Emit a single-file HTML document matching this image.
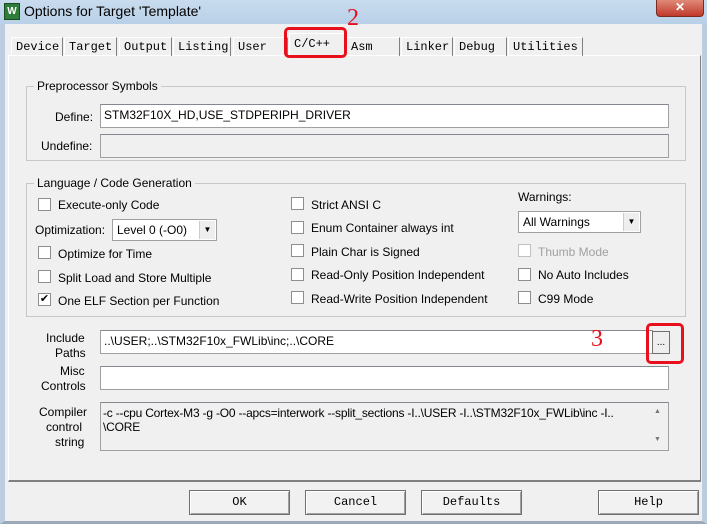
<!DOCTYPE html>
<html><head><meta charset="utf-8"><style>
*{margin:0;padding:0;box-sizing:border-box}
body{width:707px;height:524px;overflow:hidden;background:#f0f0f0;font-family:"Liberation Sans",sans-serif;font-size:12px;color:#000;position:relative;letter-spacing:0}
.a{position:absolute;white-space:nowrap}
.title{left:0;top:0;width:707px;height:24px;background:linear-gradient(#c9dcee,#b8d0e8)}
.frame{left:0;top:24px;width:707px;height:500px;border-left:5px solid #bccde0;border-right:5px solid #bccde0;border-bottom:3px solid #9aa8b8;background:#f0f0f0}
.tab{top:37px;height:19px;font-family:"Liberation Mono",monospace;font-size:12px;letter-spacing:0;line-height:19px;padding-left:4px;border-left:1px solid #fff;border-right:1px solid #808080;border-top:1px solid #fff}
.page{left:8px;top:55px;width:693px;height:427px;border:1px solid #fff;border-right-color:#808080;border-bottom:2px solid #808080}
.grp{border:1px solid #c8c8c8}
.leg{background:#f0f0f0;padding:0 3px}
.in{background:#fff;border:1px solid #a0a0a0;border-top-color:#828790;height:24px;padding:3px 3px;font-size:12px}
.gray{background:#f0f0f0}
.cb{width:13px;height:13px;border:1px solid #8e8e8e;background:#fff}
.btn{top:490px;width:101px;height:25px;border:1px solid #707070;background:#f2f2f2;box-shadow:inset 1px 1px #fff,inset -1px -1px #a0a0a0;font-family:"Liberation Mono",monospace;font-size:12px;letter-spacing:0;text-align:center;line-height:23px}
.red{border:3px solid #e8101c;border-radius:5px}
.sel{background:#fff;border:1px solid #a0a0a0;height:22px;padding:3px 4px}
.arr{position:absolute;right:1px;top:1px;width:16px;height:18px;background:#eee;border-left:1px solid #ccc;font-size:8px;text-align:center;line-height:18px}
</style></head><body>
<div class="a title"></div>
<div class="a" style="left:4px;top:3px;width:16px;height:17px;background:#2e7d3a;border:1px solid #1a4d22;color:#fff;font-size:10px;line-height:15px;text-align:center;font-weight:bold">W</div>
<div class="a" style="left:24px;top:3px;font-size:14px;letter-spacing:0">Options for Target 'Template'</div>
<div class="a" style="left:656px;top:0;width:48px;height:17px;background:linear-gradient(#e08a78,#c0392b);border:1px solid #7a2a20;border-top:none;border-radius:0 0 4px 4px;color:#fff;text-align:center;font-size:12px;line-height:15px;font-weight:bold">✕</div>
<div class="a frame"></div>
<div class="a page"></div>
<div class="a tab" style="left:11px;width:52px">Device</div>
<div class="a tab" style="left:64px;width:53px">Target</div>
<div class="a tab" style="left:119px;width:53px">Output</div>
<div class="a tab" style="left:173px;width:58px">Listing</div>
<div class="a tab" style="left:233px;width:55px">User</div>
<div class="a tab" style="left:289px;top:33px;height:23px;width:56px;background:#f0f0f0;border-bottom:none;line-height:21px">C/C++</div>
<div class="a tab" style="left:346px;width:54px">Asm</div>
<div class="a tab" style="left:401px;width:52px">Linker</div>
<div class="a tab" style="left:454px;width:53px">Debug</div>
<div class="a tab" style="left:508px;width:75px">Utilities</div>
<div class="a red" style="left:284px;top:27px;width:63px;height:31px"></div>
<div class="a" style="left:347px;top:5px;color:#e8101c;font-family:'Liberation Serif',serif;font-size:24px;letter-spacing:0">2</div>

<div class="a grp" style="left:26px;top:86px;width:660px;height:75px"></div>
<div class="a leg" style="left:34px;top:79px">Preprocessor Symbols</div>
<div class="a" style="left:55px;top:110px">Define:</div>
<div class="a in" style="left:100px;top:104px;width:569px">STM32F10X_HD,USE_STDPERIPH_DRIVER</div>
<div class="a" style="left:41px;top:139px">Undefine:</div>
<div class="a in gray" style="left:100px;top:134px;width:569px"></div>

<div class="a grp" style="left:26px;top:183px;width:660px;height:134px"></div>
<div class="a leg" style="left:34px;top:176px">Language / Code Generation</div>
<div class="a cb" style="left:38px;top:198px"></div><div class="a" style="left:58px;top:198px">Execute-only Code</div>
<div class="a" style="left:35px;top:223px">Optimization:</div>
<div class="a sel" style="left:112px;top:219px;width:105px">Level 0 (-O0)<div class="arr">▼</div></div>
<div class="a cb" style="left:38px;top:246px"></div><div class="a" style="left:58px;top:247px">Optimize for Time</div>
<div class="a cb" style="left:38px;top:270px"></div><div class="a" style="left:58px;top:271px">Split Load and Store Multiple</div>
<div class="a cb" style="left:38px;top:293px;font-size:11px;line-height:11px;text-align:center">✔</div><div class="a" style="left:58px;top:294px">One ELF Section per Function</div>

<div class="a cb" style="left:291px;top:197px"></div><div class="a" style="left:311px;top:198px">Strict ANSI C</div>
<div class="a cb" style="left:291px;top:221px"></div><div class="a" style="left:311px;top:221px">Enum Container always int</div>
<div class="a cb" style="left:291px;top:244px"></div><div class="a" style="left:311px;top:245px">Plain Char is Signed</div>
<div class="a cb" style="left:291px;top:268px"></div><div class="a" style="left:311px;top:268px">Read-Only Position Independent</div>
<div class="a cb" style="left:291px;top:291px"></div><div class="a" style="left:311px;top:292px">Read-Write Position Independent</div>

<div class="a" style="left:518px;top:190px">Warnings:</div>
<div class="a sel" style="left:518px;top:211px;width:123px">All Warnings<div class="arr">▼</div></div>
<div class="a cb" style="left:518px;top:244px;border-color:#c0c0c0"></div><div class="a" style="left:538px;top:245px;color:#a0a0a0">Thumb Mode</div>
<div class="a cb" style="left:518px;top:268px"></div><div class="a" style="left:538px;top:268px">No Auto Includes</div>
<div class="a cb" style="left:518px;top:291px"></div><div class="a" style="left:538px;top:292px">C99 Mode</div>

<div class="a" style="left:46px;top:331px">Include</div><div class="a" style="left:55px;top:346px">Paths</div>
<div class="a in" style="left:100px;top:330px;width:553px">..\USER;..\STM32F10x_FWLib\inc;..\CORE</div>
<div class="a" style="left:652px;top:331px;width:18px;height:23px;background:#eee;border:1px solid #707070;font-size:10px;text-align:center;line-height:22px">...</div>
<div class="a red" style="left:646px;top:323px;width:38px;height:41px"></div>
<div class="a" style="left:591px;top:326px;color:#e8101c;font-family:'Liberation Serif',serif;font-size:24px;letter-spacing:0">3</div>
<div class="a" style="left:60px;top:364px">Misc</div><div class="a" style="left:41px;top:379px">Controls</div>
<div class="a in" style="left:100px;top:366px;width:569px"></div>
<div class="a" style="left:39px;top:405px">Compiler</div><div class="a" style="left:46px;top:420px">control</div><div class="a" style="left:55px;top:435px">string</div>
<div class="a in gray" style="left:100px;top:402px;width:569px;height:49px;white-space:normal;line-height:14px;padding:3px 18px 3px 2px;font-size:12px;letter-spacing:-0.2px">-c --cpu Cortex-M3 -g -O0 --apcs=interwork --split_sections -I..\USER -I..\STM32F10x_FWLib\inc -I..<br>\CORE</div>
<div class="a" style="left:654px;top:408px;font-size:7px;color:#777">▲</div>
<div class="a" style="left:654px;top:436px;font-size:7px;color:#777">▼</div>

<div class="a btn" style="left:189px">OK</div>
<div class="a btn" style="left:305px">Cancel</div>
<div class="a btn" style="left:421px">Defaults</div>
<div class="a btn" style="left:598px">Help</div>
</body></html>
